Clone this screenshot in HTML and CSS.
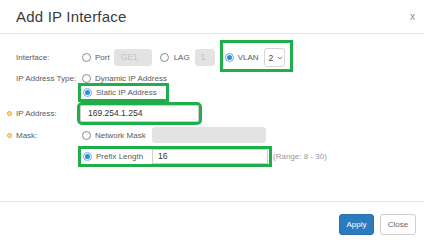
FILE: index.html
```html
<!DOCTYPE html>
<html lang="en">
<head>
  <meta charset="UTF-8">
  <meta name="viewport" content="width=device-width, initial-scale=1.0">
  <title>Add IP Interface</title>
  <link rel="stylesheet" href="styles.css">
</head>
<body>
  <div class="modal">
    <div class="modal-header">
      <h2 class="title">Add IP Interface</h2>
      <span class="close">x</span>
    </div>

    <div class="modal-body">
      <div class="row row-iface">
        <span class="label">Interface:</span>
        <div class="controls">
          <span class="radio"><span class="dot"></span>Port</span>
          <input class="field field-off w-ge" type="text" value="GE1" disabled>
          <span class="radio radio-lag"><span class="dot"></span>LAG</span>
          <input class="field field-off w-lag" type="text" value="1" disabled>
          <div class="mark mark-vlan">
            <span class="radio"><span class="dot on"></span>VLAN</span>
            <span class="select">2
              <svg width="6" height="4" viewBox="0 0 6 4"><path d="M0.8 0.8 L3 3 L5.2 0.8" fill="none" stroke="#777" stroke-width="0.9"/></svg>
            </span>
          </div>
        </div>
      </div>

      <div class="row row-type">
        <span class="label">IP Address Type:</span>
        <span class="radio"><span class="dot"></span>Dynamic IP Address</span>
      </div>

      <div class="row row-static">
        <span class="label"></span>
        <div class="mark mark-static">
          <span class="radio"><span class="dot on"></span>Static IP Address</span>
        </div>
      </div>

      <div class="row row-ip">
        <span class="label"><span class="req"></span>IP Address:</span>
        <input class="field mark w-ip" type="text" value="169.254.1.254">
      </div>

      <div class="row row-mask">
        <span class="label"><span class="req"></span>Mask:</span>
        <span class="radio radio-fixed"><span class="dot"></span>Network Mask</span>
        <span class="field field-off w-mask"></span>
      </div>

      <div class="row row-prefix">
        <span class="label"></span>
        <div class="mark mark-prefix">
          <span class="radio radio-fixed"><span class="dot on"></span>Prefix Length</span>
          <input class="field w-prefix" type="text" value="16">
        </div>
        <span class="hint">(Range: 8 - 30)</span>
      </div>
    </div>

    <div class="modal-footer">
      <button class="btn btn-apply">Apply</button>
      <button class="btn btn-close">Close</button>
    </div>
  </div>
</body>
</html>
```

FILE: styles.css
```css
* { box-sizing: border-box; }
body { margin: 0; background: #fff; font-family: "Liberation Sans", Arial, sans-serif; }
.modal { width: 424px; height: 250px; }

.modal-header { height: 34px; border-bottom: 1px solid #e8e8e8; display: flex; align-items: center; justify-content: space-between; padding: 0 9px 0 16px; }
.title { margin: 0; font-size: 15px; font-weight: normal; color: #3a3a3a; letter-spacing: 0.2px; }
.close { font-size: 10px; color: #888; }

.modal-body { height: 167px; padding: 13px 0 0 16px; }
.row { display: flex; align-items: center; height: 18px; }
.row-iface { height: 20px; }
.row-type { height: 14px; margin-top: 4px; }
.row-static { height: 14px; }
.row-ip { margin-top: 5px; }
.row-mask { margin-top: 4px; }
.row-prefix { margin-top: 3px; }

.label { width: 66px; flex-shrink: 0; font-size: 8px; color: #5a5a5a; }
.req { display: inline-block; width: 5px; height: 5px; margin: 0 4px 0 -9px; border: 1.5px solid #f0a02e; border-radius: 50%; background: #fcdca0; }
.controls { display: flex; align-items: center; }

.radio { display: flex; align-items: center; gap: 4px; font-size: 8px; color: #5a5a5a; white-space: nowrap; }
.radio-lag { margin-left: 8px; gap: 5px; }
.radio-fixed { width: 70px; }
.dot { width: 9px; height: 9px; flex-shrink: 0; border: 1px solid #8a8a8a; border-radius: 50%; background: #fff; display: flex; align-items: center; justify-content: center; }
.dot.on { border-color: #62ade6; }
.dot.on::after { content: ""; width: 5px; height: 5px; border-radius: 50%; background: #2b8cd8; }

.field { display: block; height: 17px; padding: 0 7px; border: 1px solid #cfcfcf; border-radius: 2px; font-family: inherit; font-size: 8.5px; color: #333; background: #fff; outline: none; }
.field-off { background: #e3e3e3; border-color: #e3e3e3; color: #c4c4c4; border-radius: 3px; }
.w-ge { width: 38px; margin-left: 4px; padding: 0 6px; }
.w-lag { width: 20px; margin-left: 5px; padding: 0 5px; }
.w-ip { width: 119px; margin-left: -2px; }
.w-mask { width: 114px; height: 16px; }
.w-prefix { width: 116px; height: 15px; padding-left: 5px; border-radius: 0; }

.mark { outline: 3px solid #1fae4a; }
.mark-vlan { display: flex; align-items: center; margin: -4px 0 -2px 8px; padding: 5px 5px 2px 2px; }
.mark-static { display: flex; align-items: center; height: 13px; margin-left: -1px; padding: 0 9px 0 2px; }
.w-ip.mark { outline-offset: 0; }
.mark-prefix { display: flex; align-items: center; height: 15px; margin-left: -1px; padding: 0 1px 0 2px; }
.mark-prefix .radio-fixed { width: 69px; }

.select { display: flex; align-items: center; gap: 4px; height: 19px; width: 21px; margin-left: 5px; padding-left: 4px; border: 1px solid #d6d6d6; border-radius: 3px; font-size: 8.5px; color: #444; }

.hint { margin-left: 4px; font-size: 8px; color: #999; }

.modal-footer { border-top: 1px solid #e8e8e8; display: flex; justify-content: flex-end; gap: 6px; padding: 12px 8px 0 0; }
.btn { height: 21px; padding: 0; border-radius: 3px; font-family: inherit; font-size: 8px; cursor: pointer; }
.btn-apply { width: 35px; background: #2c7bbd; border: 1px solid #2670ad; color: #fff; }
.btn-close { width: 36px; background: #fff; border: 1px solid #cfcfcf; color: #666; }
```
